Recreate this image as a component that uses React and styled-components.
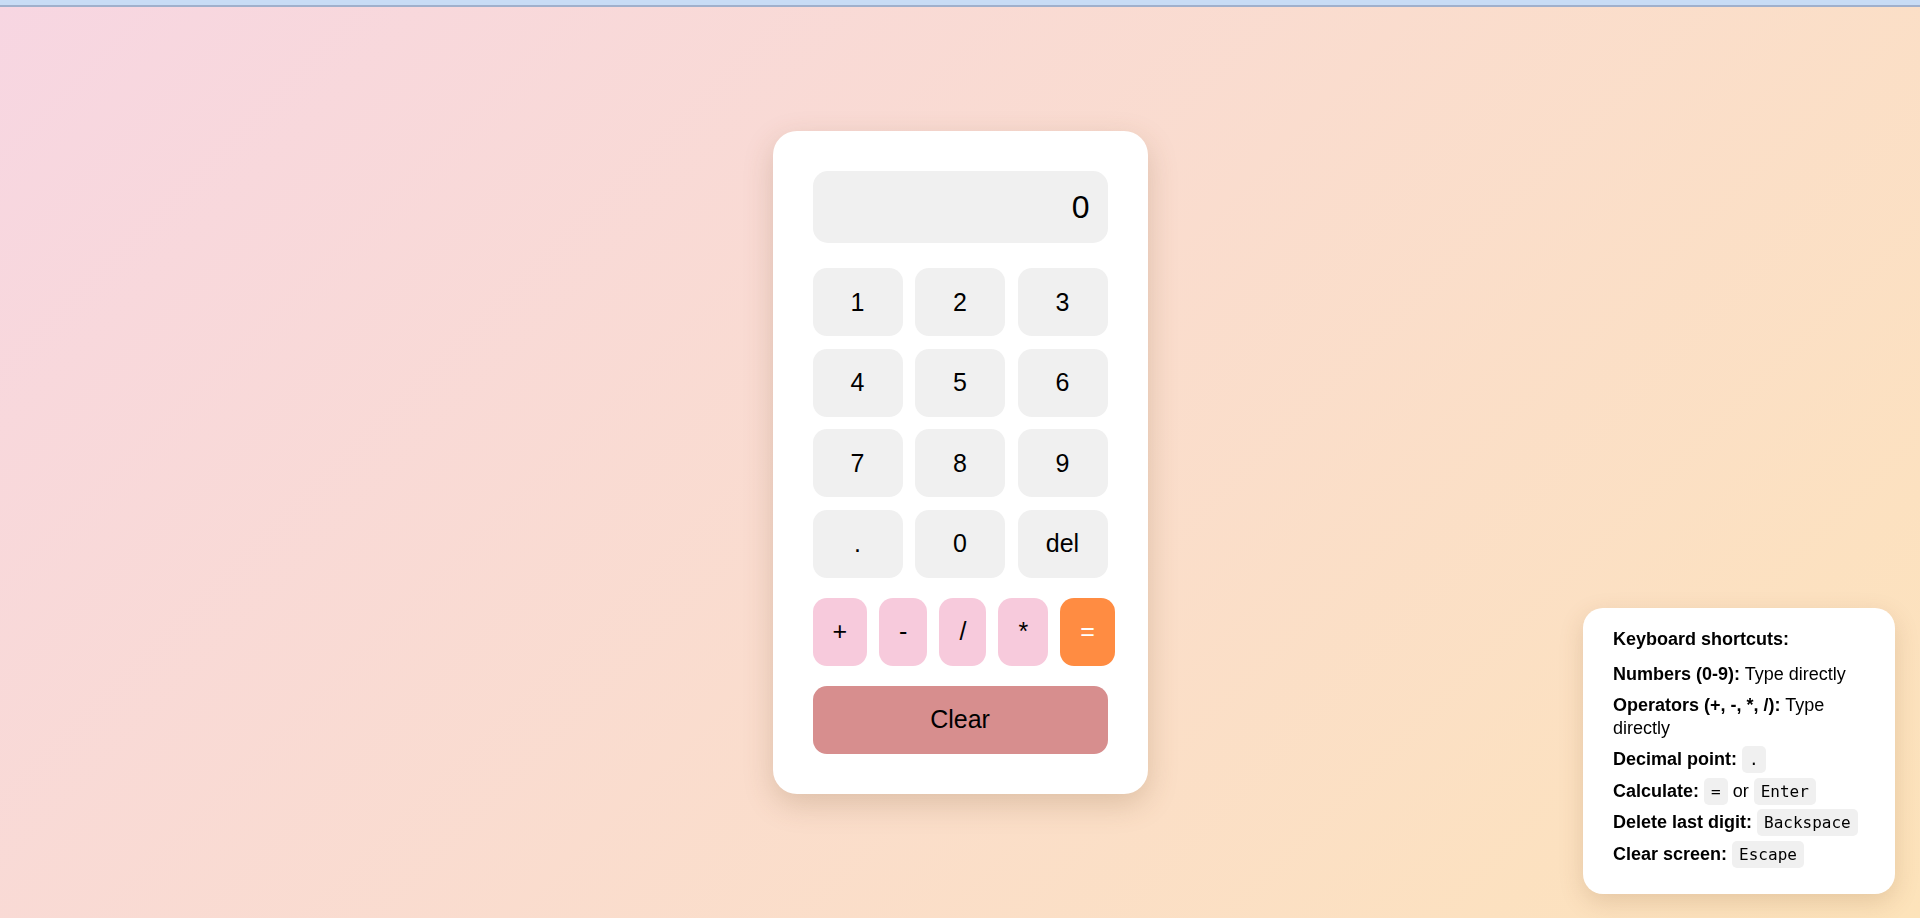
import React, { useState, useEffect } from "react"
import styled, { createGlobalStyle } from "styled-components"

const GlobalStyle = createGlobalStyle`
  html, body {
    margin: 0;
    padding: 0;
    height: 100%;
  }
  body {
    font-family: "Liberation Sans", Arial, sans-serif;
    background: linear-gradient(135deg, #f7d6e2 0%, #fde3ba 100%);
    min-height: 918px;
  }
`

const TopBar = styled.div`
  height: 5px;
  background: #c8dcf5;
  border-bottom: 2px solid #a0b0cc;
`

const Page = styled.div`
  height: 911px;
  display: flex;
  align-items: center;
  justify-content: center;
`

const Card = styled.div`
  width: 295px;
  padding: 40px;
  background: #fff;
  border-radius: 24px;
  box-shadow: 0 10px 30px rgba(120, 80, 40, 0.22);
`

const Screen = styled.div`
  height: 72px;
  box-sizing: border-box;
  background: #f0f0f0;
  border-radius: 15px;
  padding: 0 18px;
  display: flex;
  align-items: center;
  justify-content: flex-end;
  font-size: 32px;
  color: #000;
  margin-bottom: 25px;
`

const Keypad = styled.div`
  display: grid;
  grid-template-columns: repeat(3, 1fr);
  grid-auto-rows: 68px;
  column-gap: 12.5px;
  row-gap: 12.4px;
`

const Key = styled.button`
  border: none;
  border-radius: 14px;
  font-family: "Liberation Sans", Arial, sans-serif;
  font-size: 25px;
  cursor: pointer;
  background: ${(p) => p.bg || "#f0f0f0"};
  color: ${(p) => p.fg || "#000"};
`

const OpRow = styled.div`
  display: flex;
  gap: 12px;
  margin-top: 20px;
  height: 68px;
`

const OpKey = styled(Key)`
  flex-shrink: 0;
  padding: 0 20px;
`

const ClearKey = styled(Key)`
  width: 100%;
  height: 68px;
  margin-top: 20px;
  background: #d78e8e;
`

const Shortcuts = styled.div`
  position: fixed;
  right: 25px;
  bottom: 24px;
  width: 252px;
  padding: 20px 30px 20px;
  background: #fff;
  border-radius: 20px;
  box-shadow: 0 8px 24px rgba(120, 80, 40, 0.18);
  font-size: 18px;
  line-height: 22.8px;
  color: #000;
`

const Title = styled.div`
  font-weight: bold;
  margin-bottom: 12px;
`

const List = styled.ul`
  list-style: none;
  margin: 0;
  padding: 0;
`

const Item = styled.li`
  margin-bottom: 8.6px;
  & b {
    font-weight: bold;
  }
`

const Code = styled.code`
  font-family: "DejaVu Sans Mono", monospace;
  font-size: 16px;
  line-height: 1;
  background: #f0f0f0;
  border-radius: 5px;
  padding: 4px 7px;
`

const App = () => {
  const [value, setValue] = useState("0")

  const press = (k) => {
    setValue((v) => (v === "0" ? k : v + k))
  }
  const del = () => setValue((v) => (v.length > 1 ? v.slice(0, -1) : "0"))
  const clear = () => setValue("0")
  const calc = () => {
    try {
      // eslint-disable-next-line no-new-func
      const r = Function("return (" + value + ")")()
      setValue(String(r))
    } catch (e) {
      setValue("Error")
    }
  }

  useEffect(() => {
    const onKey = (e) => {
      if (/^[0-9+\-*/.]$/.test(e.key)) press(e.key)
      else if (e.key === "=" || e.key === "Enter") calc()
      else if (e.key === "Backspace") del()
      else if (e.key === "Escape") clear()
    }
    window.addEventListener("keydown", onKey)
    return () => window.removeEventListener("keydown", onKey)
  })

  const keys = ["1", "2", "3", "4", "5", "6", "7", "8", "9", ".", "0"]

  return (
    <>
      <GlobalStyle />
      <TopBar />
      <Page>
        <Card>
          <Screen>{value}</Screen>
          <Keypad>
            {keys.map((k) => (
              <Key key={k} onClick={() => press(k)}>{k}</Key>
            ))}
            <Key onClick={del}>del</Key>
          </Keypad>
          <OpRow>
            {["+", "-", "/", "*"].map((op) => (
              <OpKey key={op} bg="#f7cadc" onClick={() => press(op)}>{op}</OpKey>
            ))}
            <OpKey bg="#ff8c42" fg="#fff" onClick={calc}>=</OpKey>
          </OpRow>
          <ClearKey onClick={clear}>Clear</ClearKey>
        </Card>
      </Page>
      <Shortcuts>
        <Title>Keyboard shortcuts:</Title>
        <List>
          <Item><b>Numbers (0-9):</b> Type directly</Item>
          <Item><b>Operators (+, -, *, /):</b> Type directly</Item>
          <Item><b>Decimal point:</b> <Code>.</Code></Item>
          <Item><b>Calculate:</b> <Code>=</Code> or <Code>Enter</Code></Item>
          <Item><b>Delete last digit:</b> <Code>Backspace</Code></Item>
          <Item><b>Clear screen:</b> <Code>Escape</Code></Item>
        </List>
      </Shortcuts>
    </>
  )
}

export default App
